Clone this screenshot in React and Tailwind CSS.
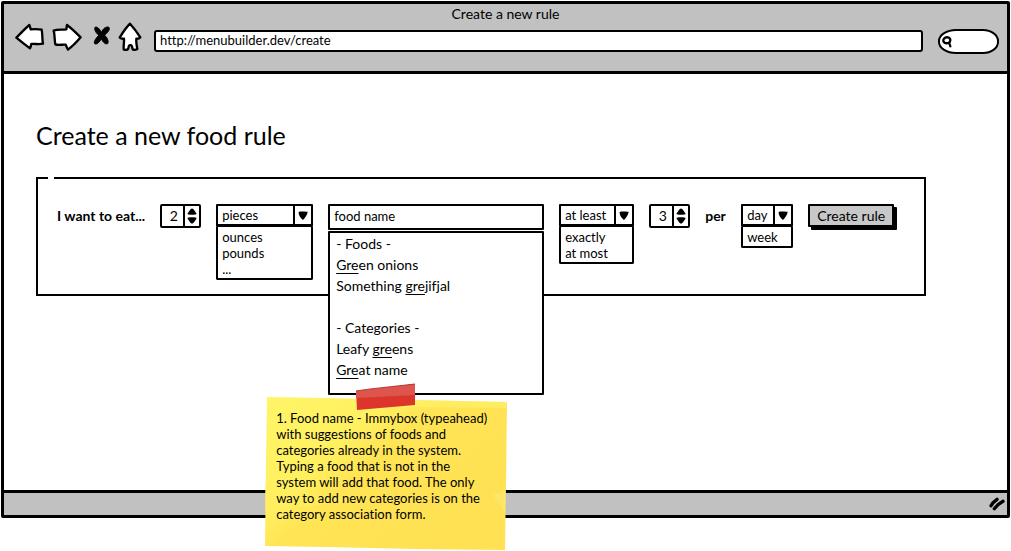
import React, { useState } from 'react';

function BackIcon() {
  return (
    <svg viewBox="45 66 90 114" className="h-[38px] w-[30px]" fill="white" stroke="black" strokeWidth="7" strokeLinejoin="round" aria-hidden="true">
      <path d="M49 113 C62 100 75 86 88 75 C90 80 91 84 92 88 C104 87 115 87 125 89 C128 102 126 118 129 131 C118 134 106 131 94 132 C93 137 92 141 90 145 C75 134 62 124 49 113 Z" />
    </svg>
  );
}

function ForwardIcon() {
  return (
    <svg viewBox="153 66 96 114" className="h-[38px] w-8" fill="white" stroke="black" strokeWidth="7" strokeLinejoin="round" aria-hidden="true">
      <path d="M161 92 C172 87 185 90 199 88 C200 83 200 79 201 75 C216 86 229 99 242 112 C230 126 218 139 204 149 C201 144 199 139 197 134 C186 133 176 137 166 133 C163 120 165 105 161 92 Z" />
    </svg>
  );
}

function StopIcon() {
  return (
    <svg viewBox="279 66 54 114" className="h-[38px] w-[18px]" fill="black" stroke="black" strokeWidth="3" strokeLinejoin="round" aria-hidden="true">
      <path d="M285 82 C292 79 299 87 304 97 C309 87 317 78 327 82 C331 89 322 99 314 106 C322 113 327 124 323 131 C315 134 308 125 304 116 C299 126 290 135 284 131 C280 124 289 114 296 106 C288 99 282 89 285 82 Z" />
    </svg>
  );
}

function HomeIcon() {
  return (
    <svg viewBox="354 66 72 114" className="h-[38px] w-6" fill="white" stroke="black" strokeWidth="7" strokeLinejoin="round" aria-hidden="true">
      <path d="M390 71 C402 84 412 98 421 112 C417 116 413 117 409 116 C408 126 410 137 412 147 C407 150 402 150 398 148 C397 143 397 139 394 136 C390 134 387 136 386 140 C386 143 385 146 383 148 C379 150 375 150 371 148 C370 137 373 126 372 116 C367 117 363 116 359 113 C368 98 378 83 390 71 Z" />
    </svg>
  );
}

function MagnifierIcon() {
  return (
    <svg viewBox="0 0 30 36" className="pointer-events-none absolute left-1 top-[7px] h-3 w-2.5" fill="none" stroke="black" strokeWidth="7" strokeLinecap="round" aria-hidden="true">
      <path d="M6 8 C12 1 25 3 25 13 C25 21 14 24 8 20 C3 17 3 12 6 8 Z" />
      <path d="M20 21 C23 24 25 27 25 31" />
    </svg>
  );
}

function Dropdown({ label, value, options, className }) {
  return (
    <div className={className}>
      <div className="relative h-[23px] rounded-[1px] border-2 border-b-[3px] border-black bg-white">
        <select
          aria-label={label}
          defaultValue={value}
          className="block h-[18px] w-full appearance-none bg-transparent pl-1 pr-5 text-[13px] leading-[18px] outline-none"
        >
          {[value, ...options].map((o) => (
            <option key={o}>{o}</option>
          ))}
        </select>
        <span className="pointer-events-none absolute inset-y-0 right-0 flex w-[18px] items-center justify-center border-l-2 border-black">
          <svg viewBox="0 0 30 27" className="h-[9px] w-2.5" aria-hidden="true">
            <path d="M2 3 C10 0 20 3 29 2 C28 12 21 20 15 27 C8 21 1 12 2 3 Z" />
          </svg>
        </span>
      </div>
      <ul className="rounded-b-[2px] border-2 border-t-0 border-black bg-white pb-px pl-1 pt-0.5 text-[13px] leading-4">
        {options.map((o) => (
          <li key={o}>{o}</li>
        ))}
      </ul>
    </div>
  );
}

function Stepper({ label, initial }) {
  const [value, setValue] = useState(initial);
  return (
    <div className="flex h-6 w-[41px] shrink-0 rounded-[2px] border-2 border-black bg-white">
      <input
        aria-label={label}
        inputMode="numeric"
        value={value}
        onChange={(e) => setValue(Number(e.target.value) || 0)}
        className="w-full min-w-0 flex-1 bg-transparent pl-0.5 text-center text-sm leading-5 outline-none"
      />
      <div className="flex w-4 flex-col items-center justify-center gap-0.5 border-l-2 border-black">
        <button type="button" aria-label="Increase" onClick={() => setValue(value + 1)}>
          <svg viewBox="0 0 30 20" className="block h-[7px] w-2.5" aria-hidden="true">
            <path d="M1 17 C6 11 10 1 15 1 C20 1 25 11 29 17 C28 21 2 21 1 17 Z" />
          </svg>
        </button>
        <button type="button" aria-label="Decrease" onClick={() => setValue(value - 1)}>
          <svg viewBox="0 0 30 20" className="block h-[7px] w-2.5" aria-hidden="true">
            <path d="M1 3 C2 -1 28 -1 29 3 C25 9 20 19 15 19 C10 19 6 9 1 3 Z" />
          </svg>
        </button>
      </div>
    </div>
  );
}

function Match({ children }) {
  return <span className="underline decoration-1 underline-offset-[3px]">{children}</span>;
}

function StickyNote() {
  return (
    <aside className="absolute -left-[63px] top-[179px] z-20 h-[168px] w-[242px] pl-[11px] pr-2 pt-[27px] text-[13px] leading-4">
      <svg viewBox="0 0 242 168" preserveAspectRatio="none" className="absolute inset-0 -z-10 h-full w-full" aria-hidden="true">
        <defs>
          <linearGradient id="paper" x1="0" y1="0" x2="1" y2="0.7">
            <stop offset="0" stopColor="#fff568" />
            <stop offset="0.35" stopColor="#fff060" />
            <stop offset="0.5" stopColor="#ffe454" />
            <stop offset="1" stopColor="#ffe153" />
          </linearGradient>
        </defs>
        <path d="M2 14 L60 15 L150 17 L242 19 L241 100 L240 167 L150 166 L60 164 L0 163 L1 80 Z" fill="url(#paper)" />
        <path d="M88 16 L242 19 L241 25 L150 24 L88 23 Z" fill="#fff36a" opacity="0.6" />
        <path d="M228 112 L241 108 L240 130 Z" fill="#ffe978" opacity="0.6" />
        <path d="M0 100 L60 114 L110 115 L60 121 L0 128 Z" fill="#ffee60" opacity="0.6" />
        <path d="M91 8 L150 1 L150 22 L92 27 Z" fill="#dc352b" />
        <path d="M91 8 L150 1 L150 12 L91 15 Z" fill="#dd554c" />
        <path d="M91 8 L105 6 L150 1" fill="none" stroke="#b63a34" strokeWidth="1" />
      </svg>
      <p className="whitespace-nowrap">
        1. Food name - Immybox (typeahead)<br />
        with suggestions of foods and<br />
        categories already in the system.<br />
        Typing a food that is not in the<br />
        system will add that food. The only<br />
        way to add new categories is on the<br />
        category association form.
      </p>
    </aside>
  );
}

export default function App() {
  return (
    <div className="flex min-h-screen flex-col bg-white px-px pb-[33px] pt-px font-['Lato',sans-serif] text-sm text-black [font-variant-ligatures:none]">
      <div className="flex flex-1 flex-col rounded-[2px] border-[3px] border-black">
        <header className="border-b-[3px] border-black bg-[#c1c1c1] pb-[11px]">
          <div className="h-[18px] text-center leading-[19px]">Create a new rule</div>
          <nav className="flex h-[38px] items-center pl-[11px] pr-2">
            <button type="button" aria-label="Back" className="mr-1.5"><BackIcon /></button>
            <button type="button" aria-label="Forward" className="mr-2.5"><ForwardIcon /></button>
            <button type="button" aria-label="Stop" className="mr-[7px]"><StopIcon /></button>
            <button type="button" aria-label="Home" className="mr-3"><HomeIcon /></button>
            <input
              aria-label="Address"
              defaultValue="http://menubuilder.dev/create"
              className="h-[22px] min-w-0 flex-1 rounded-[3px] border-2 border-black bg-white px-1 pb-0.5 text-[13px] outline-none"
            />
            <div className="relative ml-[15px] h-[25px] w-[61px]">
              <input
                type="search"
                aria-label="Search"
                className="h-full w-full appearance-none rounded-l-[18px_12px] rounded-r-[16px_12px] border-2 border-black bg-white pl-4 pr-1 outline-none"
              />
              <MagnifierIcon />
            </div>
          </nav>
        </header>

        <main className="flex-1 px-8 pt-[45px]">
          <h1 className="mb-[26px] text-[25px] leading-8">Create a new food rule</h1>
          <form onSubmit={(e) => e.preventDefault()}>
            <fieldset className="w-full max-w-[890px] border-2 border-black pb-[14px] pl-[19px]">
              <legend className="-ml-[9px] h-0.5 w-1.5" />
              <div className="flex items-start gap-[15px] pt-[25px]">
                <span className="min-w-[88px] whitespace-nowrap font-bold leading-6">I want to eat...</span>
                <Stepper label="Quantity" initial={2} />
                <Dropdown label="Unit" value="pieces" options={['ounces', 'pounds', '...']} className="w-[97px] shrink-0" />
                <div className="relative w-[216px] shrink-0">
                  <input
                    aria-label="Food name"
                    defaultValue="food name"
                    className="block h-[26px] w-full rounded-[1px] border-2 border-black bg-white px-1 pb-0.5 text-[13px] outline-none"
                  />
                  <ul className="absolute left-0 top-full z-10 mt-px w-full rounded-[1px] border-2 border-black bg-white pb-[13px] pl-1.5 leading-[21px]">
                    <li>- Foods -</li>
                    <li><Match>Gre</Match>en onions</li>
                    <li>Something <Match>gre</Match>jifjal</li>
                    <li className="h-[21px]" />
                    <li>- Categories -</li>
                    <li>Leafy <Match>gre</Match>ens</li>
                    <li><Match>Gre</Match>at name</li>
                  </ul>
                  <StickyNote />
                </div>
                <Dropdown label="Limit" value="at least" options={['exactly', 'at most']} className="w-[75px] shrink-0" />
                <Stepper label="Times" initial={3} />
                <span className="min-w-[21px] font-bold leading-6">per</span>
                <Dropdown label="Period" value="day" options={['week']} className="w-[52px] shrink-0" />
                <button type="submit" className="h-[23px] w-[86px] shrink-0 whitespace-nowrap rounded-[1px] border-2 border-black bg-[#c8c8c8] leading-[18px] shadow-[3px_3px_0_#000]">
                  Create rule
                </button>
              </div>
            </fieldset>
          </form>
        </main>

        <footer className="flex h-[25px] items-center justify-end border-t-[3px] border-black bg-[#c1c1c1] pr-0.5">
          <svg viewBox="0 0 48 42" className="h-[14px] w-4" fill="none" stroke="black" strokeWidth="10" strokeLinecap="round" aria-hidden="true">
            <path d="M6 26 C10 18 16 13 24 7" />
            <path d="M16 35 C23 26 31 19 42 13" />
          </svg>
        </footer>
      </div>
    </div>
  );
}
